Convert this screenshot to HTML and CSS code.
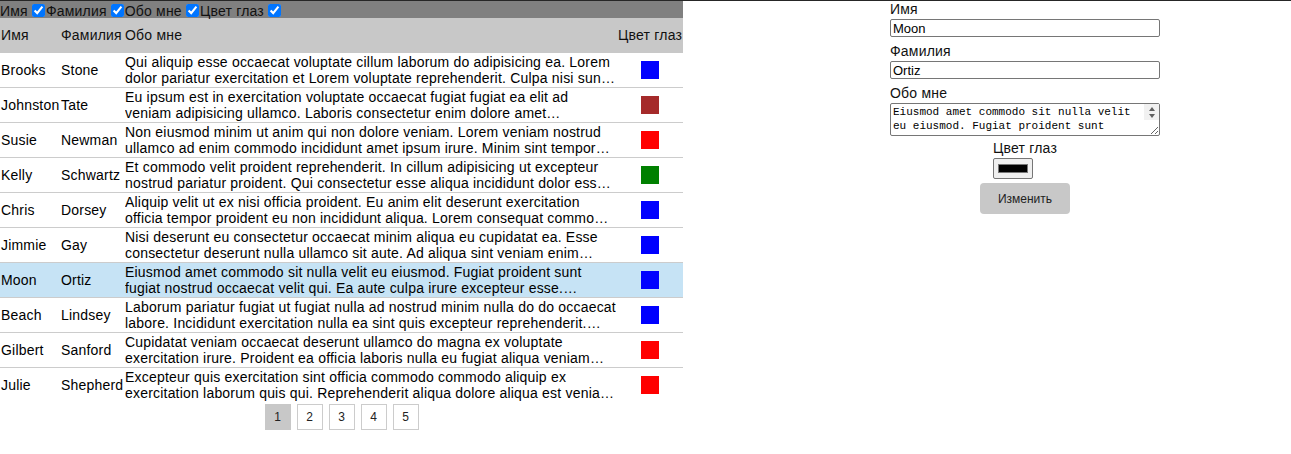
FILE: index.html
```html
<!DOCTYPE html>
<html lang="ru">
<head>
<meta charset="utf-8">
<title>Люди</title>
<link rel="stylesheet" href="styles.css">
</head>
<body>
<div class="page">
  <section class="list">
    <div class="filters">
      <label class="filter">Имя<input type="checkbox" checked></label>
      <label class="filter">Фамилия<input type="checkbox" checked></label>
      <label class="filter">Обо мне<input type="checkbox" checked></label>
      <label class="filter">Цвет глаз<input type="checkbox" checked></label>
    </div>
    <table class="people">
      <colgroup>
        <col class="c-first">
        <col class="c-last">
        <col class="c-about">
        <col class="c-eye">
      </colgroup>
      <thead>
        <tr><th>Имя</th><th>Фамилия</th><th>Обо мне</th><th>Цвет глаз</th></tr>
      </thead>
      <tbody>
        <tr><td>Brooks</td><td>Stone</td><td><div class="about">Qui aliquip esse occaecat voluptate cillum laborum do adipisicing ea. Lorem dolor pariatur exercitation et Lorem voluptate reprehenderit. Culpa nisi sunt aliqua enim consequat.</div></td><td><span class="swatch blue"></span></td></tr>
        <tr><td>Johnston</td><td>Tate</td><td><div class="about">Eu ipsum est in exercitation voluptate occaecat fugiat fugiat ea elit ad veniam adipisicing ullamco. Laboris consectetur enim dolore amet exercitation culpa.</div></td><td><span class="swatch brown"></span></td></tr>
        <tr><td>Susie</td><td>Newman</td><td><div class="about">Non eiusmod minim ut anim qui non dolore veniam. Lorem veniam nostrud ullamco ad enim commodo incididunt amet ipsum irure. Minim sint tempor dolore velit.</div></td><td><span class="swatch red"></span></td></tr>
        <tr><td>Kelly</td><td>Schwartz</td><td><div class="about">Et commodo velit proident reprehenderit. In cillum adipisicing ut excepteur nostrud pariatur proident. Qui consectetur esse aliqua incididunt dolor esse nulla.</div></td><td><span class="swatch green"></span></td></tr>
        <tr><td>Chris</td><td>Dorsey</td><td><div class="about">Aliquip velit ut ex nisi officia proident. Eu anim elit deserunt exercitation officia tempor proident eu non incididunt aliqua. Lorem consequat commodo ipsum.</div></td><td><span class="swatch blue"></span></td></tr>
        <tr><td>Jimmie</td><td>Gay</td><td><div class="about">Nisi deserunt eu consectetur occaecat minim aliqua eu cupidatat ea. Esse consectetur deserunt nulla ullamco sit aute. Ad aliqua sint veniam enim labore.</div></td><td><span class="swatch blue"></span></td></tr>
        <tr class="selected"><td>Moon</td><td>Ortiz</td><td><div class="about">Eiusmod amet commodo sit nulla velit eu eiusmod. Fugiat proident sunt fugiat nostrud occaecat velit qui. Ea aute culpa irure excepteur esse. Nostrud ipsum ad.</div></td><td><span class="swatch blue"></span></td></tr>
        <tr><td>Beach</td><td>Lindsey</td><td><div class="about">Laborum pariatur fugiat ut fugiat nulla ad nostrud minim nulla do do occaecat labore. Incididunt exercitation nulla ea sint quis excepteur reprehenderit. Exercitation ipsum.</div></td><td><span class="swatch blue"></span></td></tr>
        <tr><td>Gilbert</td><td>Sanford</td><td><div class="about">Cupidatat veniam occaecat deserunt ullamco do magna ex voluptate exercitation irure. Proident ea officia laboris nulla eu fugiat aliqua veniam dolor.</div></td><td><span class="swatch red"></span></td></tr>
        <tr><td>Julie</td><td>Shepherd</td><td><div class="about">Excepteur quis exercitation sint officia commodo commodo aliquip ex exercitation laborum quis qui. Reprehenderit aliqua dolore aliqua est veniam anim.</div></td><td><span class="swatch red"></span></td></tr>
      </tbody>
    </table>
    <div class="pager">
      <button class="page-btn active" type="button">1</button>
      <button class="page-btn" type="button">2</button>
      <button class="page-btn" type="button">3</button>
      <button class="page-btn" type="button">4</button>
      <button class="page-btn" type="button">5</button>
    </div>
  </section>
  <section class="editor">
    <form class="edit-form">
      <div class="field">
        <label class="field-label" for="f-first">Имя</label>
        <input class="text-input" id="f-first" type="text" value="Moon">
      </div>
      <div class="field">
        <label class="field-label" for="f-last">Фамилия</label>
        <input class="text-input" id="f-last" type="text" value="Ortiz">
      </div>
      <div class="field field-about">
        <label class="field-label" for="f-about">Обо мне</label>
        <div class="area-wrap">
          <textarea class="text-area" id="f-about">Eiusmod amet commodo sit nulla velit eu eiusmod. Fugiat proident sunt fugiat nostrud occaecat velit qui. Ea aute culpa irure excepteur esse. Nostrud ipsum ad.</textarea>
          <span class="fake-scroll" aria-hidden="true"><span class="arrow-up"></span><span class="arrow-down"></span></span>
        </div>
      </div>
      <div class="color-field">
        <label class="field-label" for="f-eye">Цвет глаз</label>
        <input class="color-input" id="f-eye" type="color" value="#000000">
      </div>
      <button class="submit" type="button">Изменить</button>
    </form>
  </section>
</div>
</body>
</html>
```
FILE: styles.css
```css
html, body {
  margin: 0;
  padding: 0;
  background: #fff;
}
body {
  border-top: 1px solid #262626;
  font-family: "Liberation Sans", Arial, sans-serif;
  font-size: 14px;
  letter-spacing: 0.2px;
  color: #000;
}
.page {
  display: flex;
  align-items: flex-start;
}
.list {
  width: 683px;
  flex: 0 0 683px;
}
.filters {
  display: flex;
  align-items: center;
  height: 17px;
  box-sizing: border-box;
  padding-top: 2px;
  background: #808080;
  line-height: 16px;
  color: #111;
}
.filter {
  display: flex;
  align-items: center;
}
.filter input {
  width: 13px;
  height: 13px;
  margin: 0 1px 0 4px;
}
.people {
  width: 683px;
  table-layout: fixed;
  border-collapse: collapse;
  border-spacing: 0;
}
.c-first { width: 60px; }
.c-last { width: 64px; }
.c-about { width: 493px; }
.c-eye { width: 66px; }
.people th {
  background: #c8c8c8;
  font-weight: normal;
  text-align: left;
  padding: 9px 1px;
  line-height: 16px;
  white-space: nowrap;
  border-bottom: 1px solid #c8c8c8;
  color: #111;
}
.people td {
  padding: 1px;
  line-height: 16px;
  vertical-align: middle;
  white-space: nowrap;
  border-bottom: 1px solid #cccccc;
}
.people tbody tr:last-child td {
  border-bottom: none;
}
.people td:nth-child(3) {
  white-space: normal;
}
.people td:nth-child(4) {
  text-align: center;
}
.people tr.selected td {
  background: #c6e3f5;
}
.about {
  display: -webkit-box;
  -webkit-line-clamp: 2;
  -webkit-box-orient: vertical;
  overflow: hidden;
  height: 32px;
}
.swatch {
  display: inline-block;
  width: 18px;
  height: 18px;
  vertical-align: middle;
}
.blue { background: #0000ff; }
.brown { background: #a52a2a; }
.red { background: #ff0000; }
.green { background: #008000; }
.pager {
  display: flex;
  justify-content: center;
  gap: 6px;
  margin-top: 2px;
}
.page-btn {
  width: 26px;
  height: 26px;
  padding: 0;
  border: 1px solid #cccccc;
  background: #fff;
  font-family: "Liberation Sans", Arial, sans-serif;
  font-size: 12px;
  color: #222;
}
.page-btn.active {
  background: #c8c8c8;
  border-color: #c8c8c8;
}
.editor {
  flex: 1;
  padding-left: 207px;
}
.edit-form {
  width: 270px;
  display: flex;
  flex-direction: column;
}
.field {
  display: flex;
  flex-direction: column;
  margin-bottom: 6px;
}
.field-about {
  margin-bottom: 4px;
}
.field-label {
  line-height: 17px;
  color: #111;
}
.text-input {
  margin: 1px 0 0;
  width: 270px;
  height: 18px;
  box-sizing: border-box;
  padding: 0 2px;
  border: 1px solid #767676;
  border-radius: 2px;
  font-family: "Liberation Sans", Arial, sans-serif;
  font-size: 13px;
  color: #000;
}
.area-wrap {
  position: relative;
  margin-top: 1px;
  height: 33px;
}
.text-area {
  display: block;
  margin: 0;
  width: 270px;
  height: 33px;
  box-sizing: border-box;
  padding: 1px 17px 1px 2px;
  border: 1px solid #767676;
  border-radius: 2px;
  font-family: "Liberation Mono", "DejaVu Sans Mono", monospace;
  font-size: 11px;
  line-height: 14px;
  color: #000;
  overflow: hidden;
}
.fake-scroll {
  position: absolute;
  top: 1px;
  right: 1px;
  width: 15px;
  height: 16px;
  background: #f1f1f1;
  display: flex;
  flex-direction: column;
  align-items: center;
  justify-content: center;
  gap: 3px;
}
.arrow-up {
  width: 0;
  height: 0;
  border-left: 3.5px solid transparent;
  border-right: 3.5px solid transparent;
  border-bottom: 4px solid #606060;
}
.arrow-down {
  width: 0;
  height: 0;
  border-left: 3.5px solid transparent;
  border-right: 3.5px solid transparent;
  border-top: 4px solid #606060;
}
.color-field {
  align-self: center;
  display: flex;
  flex-direction: column;
  align-items: flex-start;
}
.color-input {
  margin: 1px 0 0;
  width: 40px;
  height: 21px;
  box-sizing: border-box;
  padding: 1px 2px;
  border: 1px solid #767676;
  border-radius: 2px;
  background: #efefef;
}
.submit {
  align-self: center;
  margin-top: 4px;
  width: 90px;
  height: 31px;
  border: none;
  border-radius: 4px;
  background: #c8c8c8;
  font-family: "Liberation Sans", Arial, sans-serif;
  font-size: 12px;
  color: #222;
}
```
